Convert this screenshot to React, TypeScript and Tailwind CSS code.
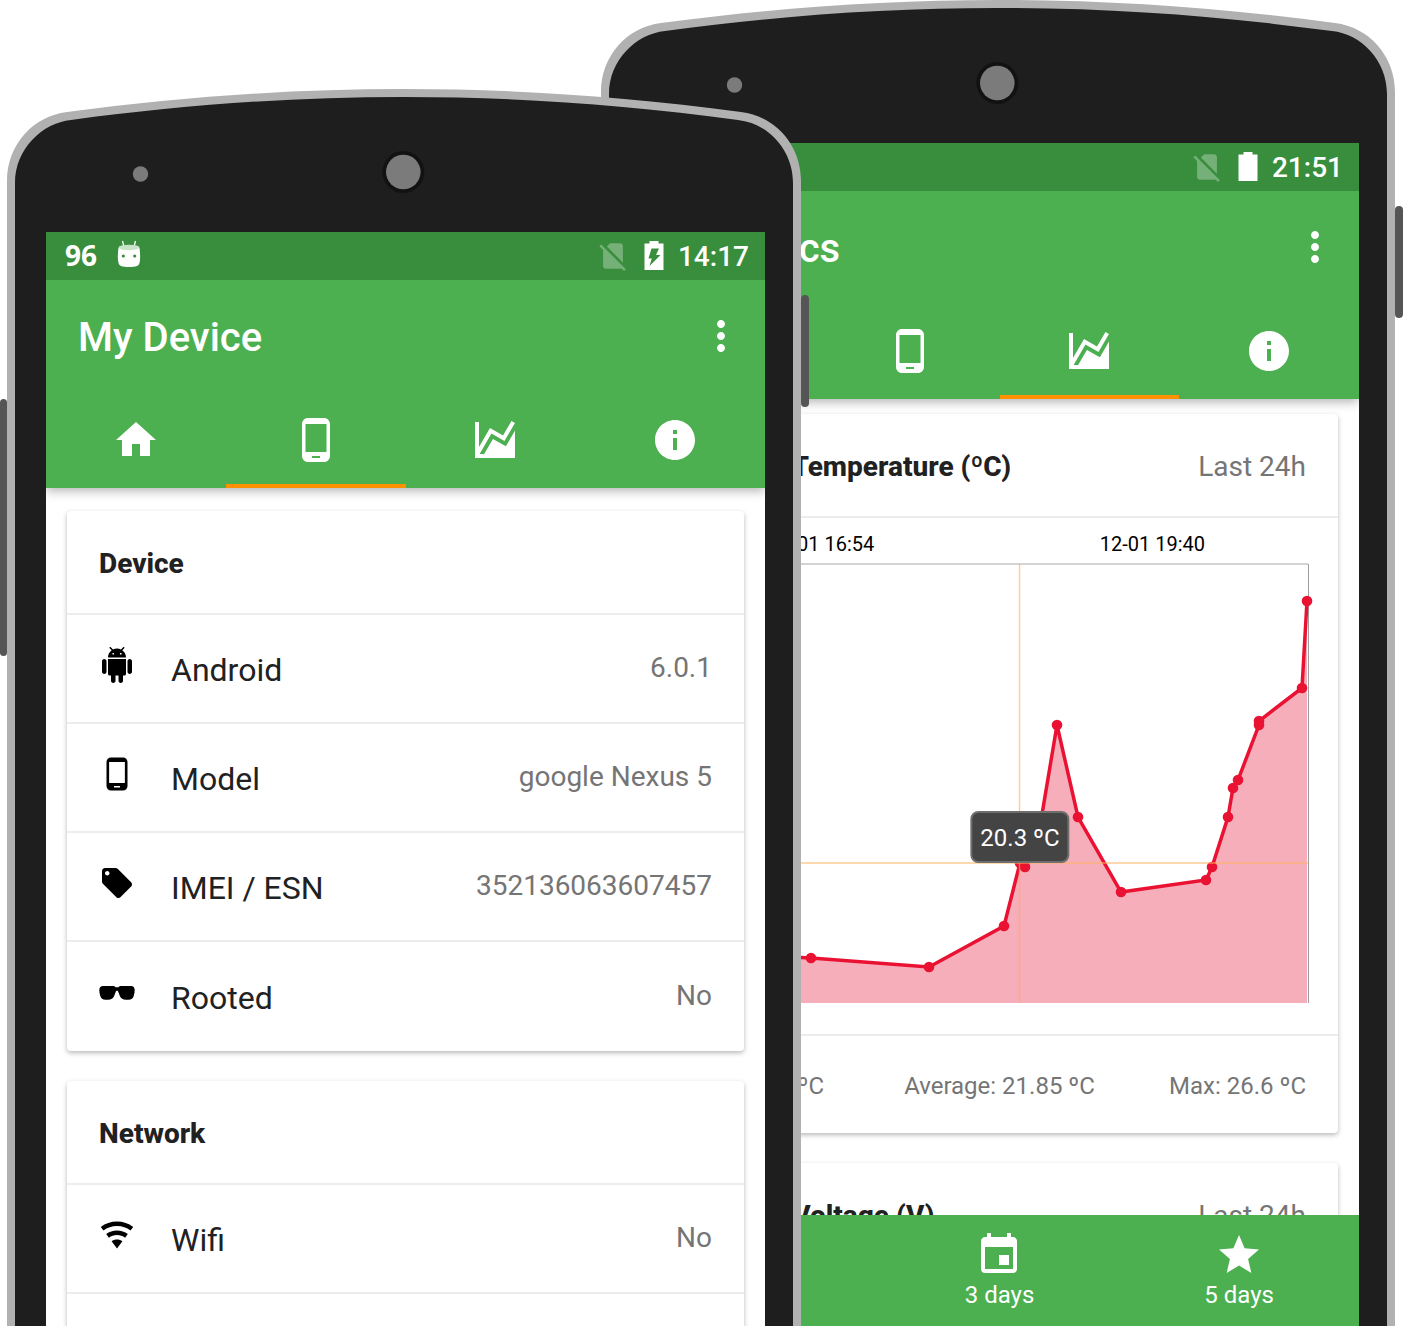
import type { ReactNode } from "react";

const PATHS = {
  home: "M10 20v-6h4v6h5v-8h3L12 3 2 12h3v8z",
  phone:
    "M16 1H8C6.34 1 5 2.34 5 4v16c0 1.66 1.34 3 3 3h8c1.66 0 3-1.34 3-3V4c0-1.66-1.34-3-3-3zm-2 20h-4v-1h4v1zm3.25-3H6.75V4h10.5v14z",
  chart:
    "M17.45,15.18L22,7.31V21H2V3H4V15.54L9.5,6L16,9.78L20.24,2.45L21.97,3.45L16.74,12.5L10.23,8.75L4.31,19H6.57L10.96,11.44L17.45,15.18Z",
  info: "M12 2C6.48 2 2 6.48 2 12s4.48 10 10 10 10-4.48 10-10S17.52 2 12 2zm1 15h-2v-6h2v6zm0-8h-2V7h2v2z",
  more: "M12 8c1.1 0 2-.9 2-2s-.9-2-2-2-2 .9-2 2 .9 2 2 2zm0 2c-1.1 0-2 .9-2 2s.9 2 2 2 2-.9 2-2-.9-2-2-2zm0 6c-1.1 0-2 .9-2 2s.9 2 2 2 2-.9 2-2-.9-2-2-2z",
  android:
    "M6 18c0 .55.45 1 1 1h1v3.5c0 .83.67 1.5 1.5 1.5s1.5-.67 1.5-1.5V19h2v3.5c0 .83.67 1.5 1.5 1.5s1.5-.67 1.5-1.5V19h1c.55 0 1-.45 1-1V8H6v10zM3.5 8C2.67 8 2 8.67 2 9.5v7c0 .83.67 1.5 1.5 1.5S5 17.33 5 16.5v-7C5 8.67 4.33 8 3.5 8zm17 0c-.83 0-1.5.67-1.5 1.5v7c0 .83.67 1.5 1.5 1.5s1.5-.67 1.5-1.5v-7c0-.83-.67-1.5-1.5-1.5zm-4.97-5.84l1.3-1.3c.2-.2.2-.51 0-.71-.2-.2-.51-.2-.71 0l-1.48 1.48C13.85 1.23 12.95 1 12 1c-.96 0-1.86.23-2.66.63L7.85.15c-.2-.2-.51-.2-.71 0-.2.2-.2.51 0 .71l1.31 1.31C6.97 3.26 6 5.01 6 7h12c0-1.99-.97-3.75-2.47-4.84zM10 5H9V4h1v1zm5 0h-1V4h1v1z",
  tag: "M21.41 11.58l-9-9C12.05 2.22 11.55 2 11 2H4c-1.1 0-2 .9-2 2v7c0 .55.22 1.05.59 1.42l9 9c.36.36.86.58 1.41.58.55 0 1.05-.22 1.41-.59l7-7c.37-.36.59-.86.59-1.41 0-.55-.23-1.06-.59-1.42zM5.5 7C4.67 7 4 6.33 4 5.5S4.67 4 5.5 4 7 4.67 7 5.5 6.33 7 5.5 7z",
  glasses:
    "M2.6 7.4H9c1 0 1.7.3 2.1.8h1.8c.4-.5 1.1-.8 2.1-.8h6.4c1.4 0 2.4 1 2.4 2.6 0 1.2-.2 2.6-.6 3.9-.5 1.7-1.6 2.6-3.6 2.6h-1.700c-2 0-3.200-.8-4-2.500l-1-2.700c-.2-.6-.5-.8-.9-.8s-.7.2-.9.8l-1 2.700c-.8 1.700-2 2.500-4 2.500H4.400c-2 0-3.100-.9-3.600-2.600C.4 12.600.2 11.200.2 10c0-1.600 1-2.600 2.400-2.600z",
  wifi: "M12,21L15.6,16.2C14.6,15.45 13.35,15 12,15C10.65,15 9.4,15.45 8.4,16.2L12,21M12,3C7.95,3 4.21,4.34 1.2,6.6L3,9C5.5,7.12 8.62,6 12,6C15.38,6 18.5,7.12 21,9L22.8,6.6C19.79,4.34 16.05,3 12,3M12,9C9.3,9 6.81,9.89 4.8,11.4L6.6,13.8C8.1,12.67 9.97,12 12,12C14.03,12 15.9,12.67 17.4,13.8L19.2,11.4C17.19,9.89 14.7,9 12,9Z",
  noSim:
    "M18.99 5c0-1.1-.89-2-1.99-2h-7L7.66 5.34 19 16.68 18.99 5zM3.65 3.88L2.38 5.15 5 7.77V19c0 1.1.9 2 2 2h10.01c.35 0 .67-.1.96-.26l1.88 1.88 1.27-1.27L3.65 3.88z",
  event:
    "M17 12h-5v5h5v-5zM16 1v2H8V1H6v2H5c-1.11 0-1.99.9-1.99 2L3 19c0 1.1.89 2 2 2h14c1.1 0 2-.9 2-2V5c0-1.1-.9-2-2-2h-1V1h-2zm3 18H5V8h14v11z",
  star: "M12 17.27L18.18 21l-1.64-7.03L22 9.24l-7.19-.61L12 2 9.19 8.63 2 9.24l5.46 4.73L5.82 21z",
};

type IconName = keyof typeof PATHS;

function Icon({ name, className }: { name: IconName; className: string }) {
  return (
    <svg viewBox="0 0 24 24" fill="currentColor" aria-hidden="true" className={className}>
      <path d={PATHS[name]} />
    </svg>
  );
}

function Battery({ charging }: { charging: boolean }) {
  return (
    <svg viewBox="0 0 20 30" fill="currentColor" aria-hidden="true" className="h-[30px] w-5">
      <path
        fillRule="evenodd"
        d={
          charging
            ? "M5.5 0h9v2.5H19.5V29H.5V2.5h5zM7.5 7.5H15l-3 6.5h4.5L5.5 25l2.3-7.5H4.5z"
            : "M5.5 0h9v2.5H19.5V29H.5V2.5h5z"
        }
      />
    </svg>
  );
}

function RobotHead() {
  return (
    <svg viewBox="0 0 24 28" fill="none" aria-hidden="true" className="mb-1 h-7 w-6">
      <path d="M5.5 1l1.3 5M18.5 1l-1.3 5" stroke="#fff" strokeWidth="1.3" />
      <path
        d="M1.5 8C1 12 .6 16 1 20c.3 3.5 1 5 3 6 4 1.4 12 1.4 16 0 2-1 2.7-2.5 3-6 .4-4 0-8-.5-12z"
        fill="#fff"
      />
      <ellipse cx="12" cy="7.5" rx="10.5" ry="2.7" fill="#c9e3ca" />
      <circle cx="6.3" cy="16" r="1.6" fill="#388e3c" />
      <circle cx="17.7" cy="16" r="1.6" fill="#388e3c" />
    </svg>
  );
}

function PhoneHead() {
  return (
    <svg
      viewBox="0 0 809 143"
      preserveAspectRatio="none"
      aria-hidden="true"
      className="block h-[143px] w-full shrink-0"
    >
      <path
        d="M7 143V92C7 56 33 27 67 23C180 8 290 0 404 0S628 8 741 23C775 27 801 56 801 92V143Z"
        fill="#b1b1b1"
      />
      <path
        d="M15 143V94C15 60 42 34 71 31C183 16 290 8 404 8S626 16 738 31C767 34 793 60 793 94V143Z"
        fill="#1e1e1e"
      />
      <circle cx="140.5" cy="85" r="7.7" fill="#7b7b7b" />
      <circle cx="403.3" cy="83" r="21" fill="#121212" />
      <circle cx="403.3" cy="83" r="17.3" fill="#7b7b7b" />
    </svg>
  );
}

function Phone({ label, className, children }: { label: string; className: string; children: ReactNode }) {
  return (
    <section
      aria-label={label}
      className={`isolate col-start-1 row-start-1 flex min-h-0 w-full max-w-[809px] flex-col ${className}`}
    >
      <PhoneHead />
      <div className="flex min-h-0 flex-1">
        <div className="w-[7px] shrink-0">
          <div className="mt-[167px] h-[257px] rounded-full bg-[#555]" />
        </div>
        <div className="flex min-h-0 min-w-0 flex-1 border-x-8 border-[#b1b1b1] bg-[#1e1e1e] pr-7 pl-[31px]">
          <div className="flex min-h-0 min-w-0 flex-1 flex-col overflow-hidden bg-white">{children}</div>
        </div>
        <div className="w-2 shrink-0">
          <div className="mt-[63px] h-[112px] rounded-full bg-[#555]" />
        </div>
      </div>
    </section>
  );
}

const TABS: { icon: IconName; label: string }[] = [
  { icon: "home", label: "Home" },
  { icon: "phone", label: "My Device" },
  { icon: "chart", label: "Statistics" },
  { icon: "info", label: "About" },
];

function StatusBar({ time, charging, children }: { time: string; charging: boolean; children?: ReactNode }) {
  return (
    <div className="relative z-20 flex h-12 shrink-0 items-center bg-[#388e3c] px-4 text-[28px] font-medium text-white">
      {children}
      <div className="ml-auto flex items-center gap-[14px]">
        <Icon name="noSim" className="size-[34px] opacity-30" />
        <Battery charging={charging} />
        <span className="pt-0.5">{time}</span>
      </div>
    </div>
  );
}

function AppBar({ title, active }: { title: string; active: string }) {
  return (
    <header className="relative z-10 shrink-0 bg-[#4caf50] text-white shadow-[0_3px_10px_rgba(0,0,0,0.3)]">
      <div className="flex h-28 items-center justify-between pr-5 pl-8">
        <h1 className="pt-1 text-[40px] font-medium">{title}</h1>
        <button type="button" aria-label="More options">
          <Icon name="more" className="size-12" />
        </button>
      </div>
      <nav className="grid h-24 grid-cols-4">
        {TABS.map((tab) => (
          <button
            key={tab.icon}
            type="button"
            aria-label={tab.label}
            className={`flex items-center justify-center border-y-4 border-t-transparent ${
              tab.icon === active ? "border-b-[#ff9100]" : "border-b-transparent"
            }`}
          >
            <Icon name={tab.icon} className="size-12" />
          </button>
        ))}
      </nav>
    </header>
  );
}

function Card({ title, note, children }: { title: string; note?: string; children?: ReactNode }) {
  return (
    <section className="shrink-0 rounded-[4px] bg-white shadow-[0_2px_5px_rgba(0,0,0,0.28)]">
      <div className="flex h-[104px] items-center justify-between border-b-2 border-[#ededed] px-8 pt-1 text-[28px]">
        <h2 className="font-extrabold whitespace-nowrap text-[#212121]">{title}</h2>
        {note && <span className="text-[#757575]">{note}</span>}
      </div>
      {children}
    </section>
  );
}

function Row({ icon, label, value }: { icon: IconName; label: string; value: string }) {
  return (
    <li className="flex h-[109px] items-center border-b-2 border-[#ededed] px-8 last:border-b-0">
      <Icon name={icon} className="mb-2 size-9 shrink-0 text-black" />
      <span className="ml-9 pt-0.5 text-[32px] text-[#212121]">{label}</span>
      <span className="mb-0.5 ml-auto text-[28px] text-[#757575]">{value}</span>
    </li>
  );
}

function DevicePhone() {
  return (
    <Phone label="My Device" className="z-10 justify-self-start pt-[89px]">
      <StatusBar time="14:17" charging>
        <span className="ml-[3px] pb-0.5 font-['Noto_Sans',sans-serif] font-bold">96</span>
        <span className="ml-5">
          <RobotHead />
        </span>
      </StatusBar>
      <AppBar title="My Device" active="phone" />
      <div className="flex min-h-0 flex-1 flex-col gap-[30px] overflow-hidden px-[21px] pt-[23px]">
        <Card title="Device">
          <ul>
            <Row icon="android" label="Android" value="6.0.1" />
            <Row icon="phone" label="Model" value="google Nexus 5" />
            <Row icon="tag" label="IMEI / ESN" value="352136063607457" />
            <Row icon="glasses" label="Rooted" value="No" />
          </ul>
        </Card>
        <Card title="Network">
          <ul>
            <Row icon="wifi" label="Wifi" value="No" />
            <li className="h-[109px]" />
          </ul>
        </Card>
      </div>
    </Phone>
  );
}

const POINTS = [
  [0, 388],
  [120, 394],
  [238, 403],
  [313, 362],
  [329, 299],
  [334, 303],
  [345, 286],
  [366, 161],
  [387, 253],
  [430, 328],
  [515, 316],
  [521, 303],
  [537, 253],
  [542, 224],
  [547, 216],
  [568, 161],
  [568, 157],
  [611, 124],
  [616, 37],
];

function TemperatureChart() {
  const line = POINTS.map(([x, y]) => `${x},${y}`).join(" ");
  return (
    <div className="px-[30px] pb-[30px]">
      <div className="flex h-[46px] items-center justify-between pt-1.5 pr-[103px] pl-[78px] text-[20px] text-black">
        <span>12-01 16:54</span>
        <span>12-01 19:40</span>
      </div>
      <div className="relative">
        <svg
          viewBox="0 0 617 440"
          preserveAspectRatio="none"
          role="img"
          aria-label="Battery temperature over the last 24 hours"
          className="block h-[440px] w-full overflow-visible"
        >
          <path d="M0 0H617" stroke="#d3d3d3" strokeWidth="2" />
          <path d="M617.5 0V439" stroke="#9e9e9e" strokeWidth="1" />
          <polygon points={`0,439 ${line} 616,439`} fill="#f7aebb" />
          <polyline points={line} fill="none" stroke="#ea1232" strokeWidth="3.5" />
          {POINTS.map(([x, y]) => (
            <circle key={`${x}-${y}`} cx={x} cy={y} r="5.3" fill="#ea1232" />
          ))}
          <path d="M328.5 0V439" stroke="#ffab4a" strokeOpacity="0.6" strokeWidth="1.4" />
          <path d="M0 299H617" stroke="#ffb45c" strokeOpacity="0.5" strokeWidth="2" />
        </svg>
        <div className="absolute top-[247px] left-[329px] flex h-[52px] -translate-x-1/2 items-center rounded-lg border-2 border-[#6e6e6e] bg-[#444] px-2 pt-0.5 text-[24px] whitespace-nowrap text-white">
          20.3 ºC
        </div>
      </div>
    </div>
  );
}

const RANGES: { icon: IconName; label: string }[] = [
  { icon: "event", label: "3 days" },
  { icon: "star", label: "5 days" },
];

function StatisticsPhone() {
  return (
    <Phone label="Statistics" className="justify-self-end">
      <StatusBar time="21:51" charging={false} />
      <AppBar title="Statistics" active="chart" />
      <div className="flex min-h-0 flex-1 flex-col gap-[30px] overflow-hidden px-[21px] pt-[15px]">
        <Card title="Battery Temperature (ºC)" note="Last 24h">
          <TemperatureChart />
          <div className="grid h-[99px] grid-cols-[1fr_auto_1fr] items-center border-t-2 border-[#ededed] px-8 pt-0.5 text-[24px] text-[#757575]">
            <span>Min: 17.2 ºC</span>
            <span>Average: 21.85 ºC</span>
            <span className="text-right">Max: 26.6 ºC</span>
          </div>
        </Card>
        <Card title="Battery Voltage (V)" note="Last 24h" />
      </div>
      <nav className="grid h-[111px] shrink-0 grid-cols-3 bg-[#4caf50] text-[24px] text-white">
        {RANGES.map((range) => (
          <button
            key={range.label}
            type="button"
            className="flex flex-col items-center pt-4 leading-8 first:col-start-2"
          >
            <Icon name={range.icon} className="size-12" />
            {range.label}
          </button>
        ))}
      </nav>
    </Phone>
  );
}

export default function App() {
  return (
    <main className="grid h-screen grid-cols-1 grid-rows-1 overflow-hidden bg-white font-[Roboto,sans-serif]">
      <StatisticsPhone />
      <DevicePhone />
    </main>
  );
}
